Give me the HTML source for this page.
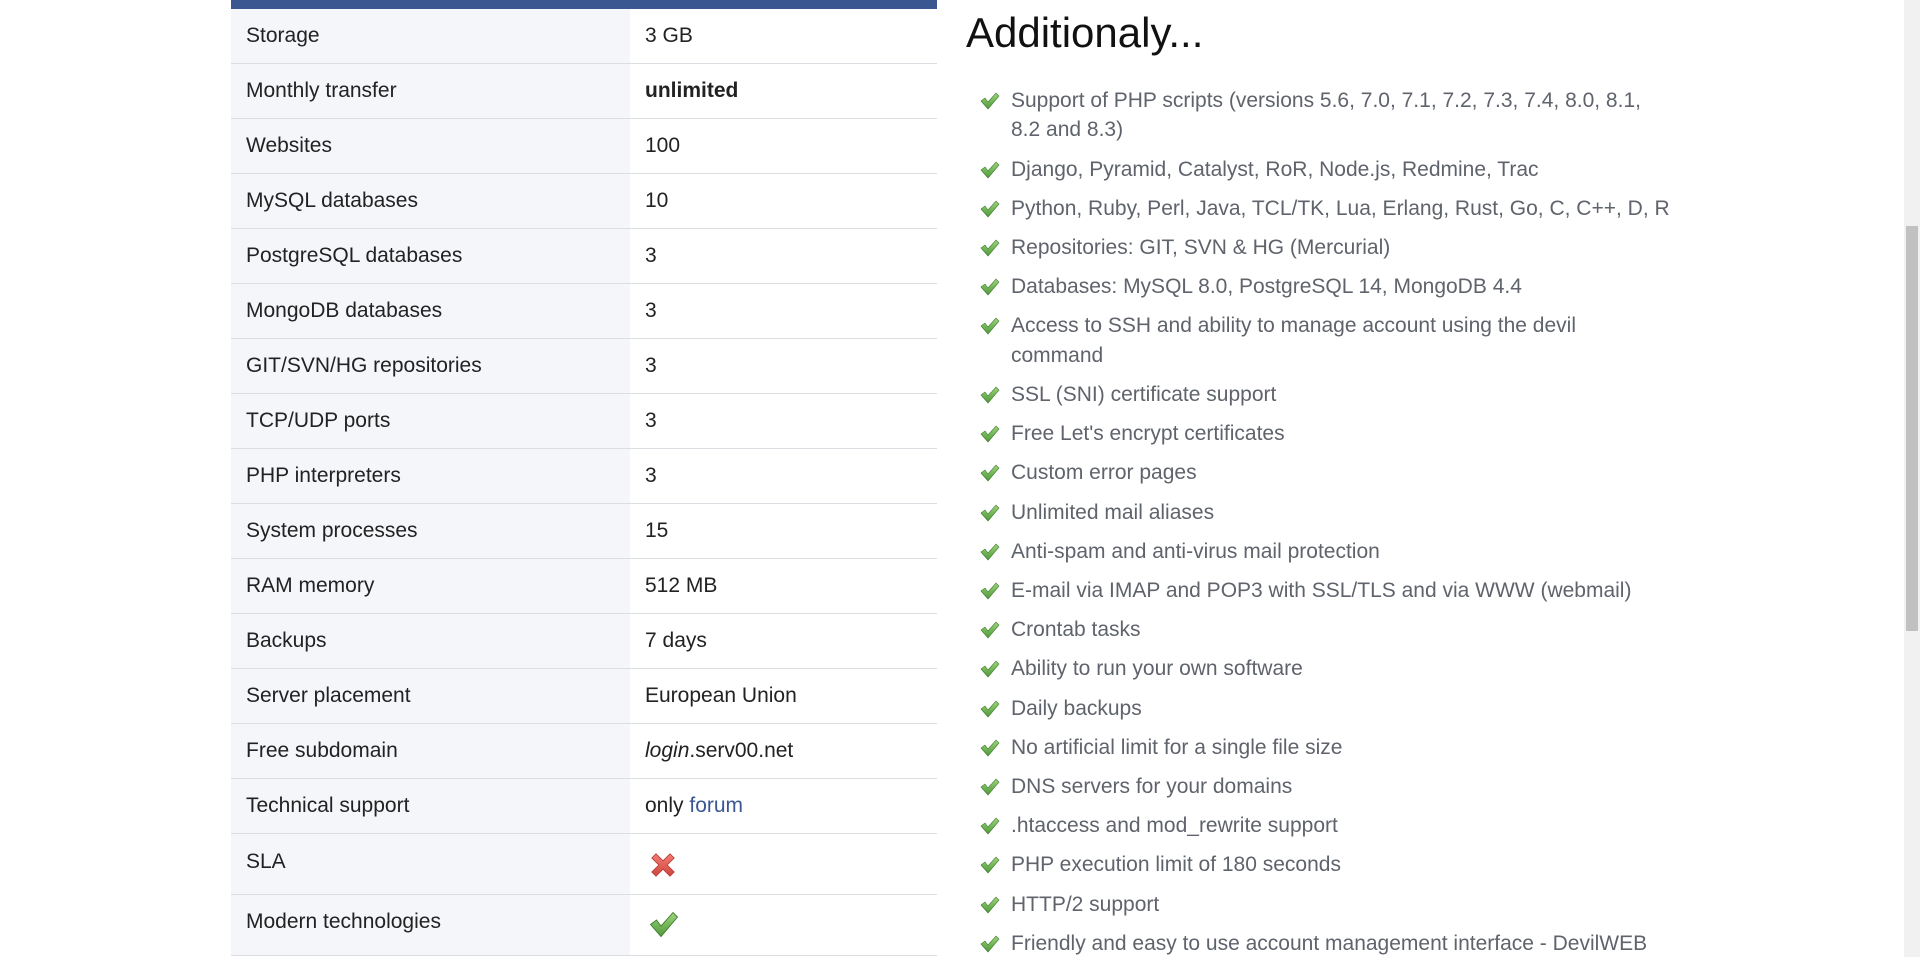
<!DOCTYPE html>
<html><head><meta charset="utf-8"><style>
html,body{margin:0;padding:0;background:#fff;width:1920px;height:957px;overflow:hidden;font-family:"Liberation Sans",Arial,sans-serif;}
.bar{position:absolute;left:231px;top:0;width:706px;height:9px;background:#3b5791;}
table{position:absolute;left:231px;top:9px;width:706px;border-collapse:collapse;font-size:21px;color:#222;}
td{height:54px;border-bottom:1.3px solid #dcdde3;padding:0;vertical-align:middle;}
td.a{width:384px;background:#f5f6fa;padding-left:15px;}
td.b{padding-left:15px;}
a{color:#3b5791;text-decoration:none;}
h1{position:absolute;left:966px;top:9px;margin:0;font-weight:normal;font-size:42px;color:#111;}
ul{position:absolute;left:980px;top:86px;margin:0;padding:0;list-style:none;width:692px;font-size:21px;color:#5f636b;line-height:29.4px;}
li{position:relative;padding-left:31px;margin-bottom:9.8px;}
li svg{position:absolute;left:0;top:6px;}
.sb{position:absolute;left:1904px;top:0;width:16px;height:957px;background:#f1f1f1;}
.th{position:absolute;left:1906px;top:226px;width:12px;height:405px;background:#c1c1c1;}
</style></head><body>
<div class="bar"></div>
<svg width="0" height="0" style="position:absolute"><defs>
<linearGradient id="g" x1="0" y1="0" x2="0" y2="1"><stop offset="0" stop-color="#9fd47e"/><stop offset="1" stop-color="#4f9a3a"/></linearGradient>
<linearGradient id="r" x1="0" y1="0" x2="0" y2="1"><stop offset="0" stop-color="#f27d76"/><stop offset="1" stop-color="#d0443c"/></linearGradient>
<symbol id="ck" viewBox="0 0 20 18"><path d="M1 9 L5 6 L8 10 L16 1 L19 4 L8 17 Z" fill="url(#g)" stroke="#3d7d2c" stroke-width="0.6"/></symbol>
</defs></svg>
<table>
<tr><td class="a">Storage</td><td class="b">3 GB</td></tr>
<tr><td class="a">Monthly transfer</td><td class="b"><b>unlimited</b></td></tr>
<tr><td class="a">Websites</td><td class="b">100</td></tr>
<tr><td class="a">MySQL databases</td><td class="b">10</td></tr>
<tr><td class="a">PostgreSQL databases</td><td class="b">3</td></tr>
<tr><td class="a">MongoDB databases</td><td class="b">3</td></tr>
<tr><td class="a">GIT/SVN/HG repositories</td><td class="b">3</td></tr>
<tr><td class="a">TCP/UDP ports</td><td class="b">3</td></tr>
<tr><td class="a">PHP interpreters</td><td class="b">3</td></tr>
<tr><td class="a">System processes</td><td class="b">15</td></tr>
<tr><td class="a">RAM memory</td><td class="b">512 MB</td></tr>
<tr><td class="a">Backups</td><td class="b">7 days</td></tr>
<tr><td class="a">Server placement</td><td class="b">European Union</td></tr>
<tr><td class="a">Free subdomain</td><td class="b"><i>login</i>.serv00.net</td></tr>
<tr><td class="a">Technical support</td><td class="b">only <a>forum</a></td></tr>
<tr><td class="a" style="height:60px;vertical-align:top;padding-top:16px;box-sizing:border-box">SLA</td><td class="b" style="height:60px"><svg width="28" height="28" viewBox="0 0 20 20" style="margin-left:4px;margin-top:8px"><path d="M2 5 L5 2 L10 7 L15 2 L18 5 L13 10 L18 15 L15 18 L10 13 L5 18 L2 15 L7 10 Z" fill="url(#r)" stroke="#b53a33" stroke-width="0.6"/></svg></td></tr>
<tr><td class="a" style="height:60px;vertical-align:top;padding-top:15px;box-sizing:border-box">Modern technologies</td><td class="b" style="height:60px"><svg width="30" height="27" style="margin-left:4px;margin-top:4px"><use href="#ck"/></svg></td></tr>
</table>
<h1>Additionaly...</h1>
<ul>
<li><svg width="20" height="18"><use href="#ck"/></svg>Support of PHP scripts (versions 5.6, 7.0, 7.1, 7.2, 7.3, 7.4, 8.0, 8.1, 8.2 and 8.3)</li>
<li><svg width="20" height="18"><use href="#ck"/></svg>Django, Pyramid, Catalyst, RoR, Node.js, Redmine, Trac</li>
<li><svg width="20" height="18"><use href="#ck"/></svg>Python, Ruby, Perl, Java, TCL/TK, Lua, Erlang, Rust, Go, C, C++, D, R</li>
<li><svg width="20" height="18"><use href="#ck"/></svg>Repositories: GIT, SVN &amp; HG (Mercurial)</li>
<li><svg width="20" height="18"><use href="#ck"/></svg>Databases: MySQL 8.0, PostgreSQL 14, MongoDB 4.4</li>
<li><svg width="20" height="18"><use href="#ck"/></svg>Access to SSH and ability to manage account using the devil command</li>
<li><svg width="20" height="18"><use href="#ck"/></svg>SSL (SNI) certificate support</li>
<li><svg width="20" height="18"><use href="#ck"/></svg>Free Let's encrypt certificates</li>
<li><svg width="20" height="18"><use href="#ck"/></svg>Custom error pages</li>
<li><svg width="20" height="18"><use href="#ck"/></svg>Unlimited mail aliases</li>
<li><svg width="20" height="18"><use href="#ck"/></svg>Anti-spam and anti-virus mail protection</li>
<li><svg width="20" height="18"><use href="#ck"/></svg>E-mail via IMAP and POP3 with SSL/TLS and via WWW (webmail)</li>
<li><svg width="20" height="18"><use href="#ck"/></svg>Crontab tasks</li>
<li><svg width="20" height="18"><use href="#ck"/></svg>Ability to run your own software</li>
<li><svg width="20" height="18"><use href="#ck"/></svg>Daily backups</li>
<li><svg width="20" height="18"><use href="#ck"/></svg>No artificial limit for a single file size</li>
<li><svg width="20" height="18"><use href="#ck"/></svg>DNS servers for your domains</li>
<li><svg width="20" height="18"><use href="#ck"/></svg>.htaccess and mod_rewrite support</li>
<li><svg width="20" height="18"><use href="#ck"/></svg>PHP execution limit of 180 seconds</li>
<li><svg width="20" height="18"><use href="#ck"/></svg>HTTP/2 support</li>
<li><svg width="20" height="18"><use href="#ck"/></svg>Friendly and easy to use account management interface - DevilWEB</li>
</ul>
<div class="sb"></div><div class="th"></div>
</body></html>
